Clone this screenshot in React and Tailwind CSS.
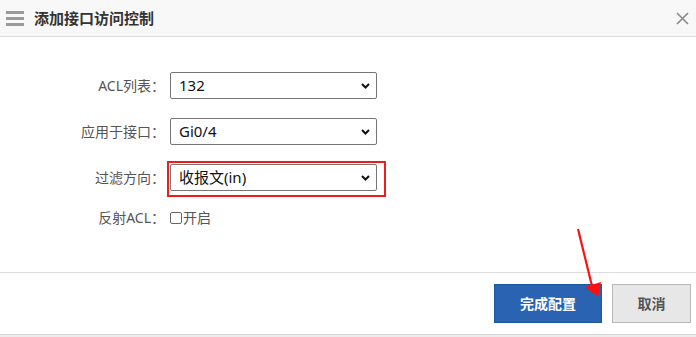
import React from 'react';

const FONT = { fontFamily: '"Noto Sans", "Noto Sans CJK SC", sans-serif' };

// native-looking select box
const FakeSelect = ({ value }) => (
  <div className="w-[207px] h-[27px] border border-[#767676] rounded-[2px] bg-white flex items-center justify-between pl-[8px] pr-[6px]">
    <span className="text-[15px] text-[#111] leading-none">{value}</span>
    <svg width="9" height="6" viewBox="0 0 9 6">
      <path d="M1 1 L4.5 4.5 L8 1" fill="none" stroke="#111" strokeWidth="2" />
    </svg>
  </div>
);

const Row = ({ label, children }) => (
  <div className="flex items-center">
    <div className="w-[165px] text-right text-[14px] text-[#555]">{label}</div>
    <div className="ml-[5px] relative">{children}</div>
  </div>
);

export default function App() {
  return (
    <div className="w-[696px] h-[337px] bg-[#ececec] relative overflow-hidden" style={FONT}>
      <div className="h-[335px] bg-white border-b border-[#d6d6d6] flex flex-col">
        {/* HEADER */}
        <header className="h-[37px] bg-[#f8f8f8] border-b border-[#dcdcdc] flex items-center pl-[6px] pr-[7px]">
          <div className="flex flex-col gap-[3px] w-[18px]">
            <span className="h-[3px] bg-[#9a9a9a]"></span>
            <span className="h-[3px] bg-[#9a9a9a]"></span>
            <span className="h-[3px] bg-[#9a9a9a]"></span>
          </div>
          <h1 className="ml-[10px] text-[15px] font-bold text-[#333]">添加接口访问控制</h1>
          <svg className="ml-auto" width="13" height="13" viewBox="0 0 13 13">
            <path d="M1 1 L12 12 M12 1 L1 12" stroke="#8a8a8a" strokeWidth="1.6" />
          </svg>
        </header>

        {/* FORM */}
        <main className="flex-1 pt-[35px] flex flex-col gap-[19px] border-b border-[#dcdcdc]">
          <Row label="ACL列表："><FakeSelect value="132" /></Row>
          <Row label="应用于接口："><FakeSelect value="Gi0/4" /></Row>
          <Row label="过滤方向：">
            <FakeSelect value="收报文(in)" />
            <div className="absolute left-[-3px] top-[-3px] w-[219px] h-[36px] border-2 border-[#ee1c1c]"></div>
          </Row>
          <div className="flex items-center mt-[-3px]">
            <div className="w-[165px] text-right text-[14px] text-[#555]">反射ACL：</div>
            <label className="ml-[5px] flex items-center text-[14px] text-[#555]">
              <span className="w-[12px] h-[12px] border border-[#666] rounded-[2px] bg-white"></span>
              <span className="ml-[1px]">开启</span>
            </label>
          </div>
        </main>

        {/* FOOTER */}
        <footer className="h-[61px] flex items-center justify-end gap-[10px] pr-[5px]">
          <button className="w-[108px] h-[39px] bg-[#2b63b3] border border-[#1b579e] text-white text-[14px] font-bold">完成配置</button>
          <button className="w-[79px] h-[39px] bg-[#e7e7e7] border border-[#b8b8b8] text-[#555] text-[14px] font-bold">取消</button>
        </footer>
      </div>

      {/* annotation arrow */}
      <svg className="absolute left-0 top-0 pointer-events-none" width="696" height="337">
        <line x1="578" y1="229" x2="592" y2="286" stroke="#ff1010" strokeWidth="2.2" />
        <polygon points="585,287 601,282 598,297" fill="#ff1010" />
      </svg>
    </div>
  );
}
